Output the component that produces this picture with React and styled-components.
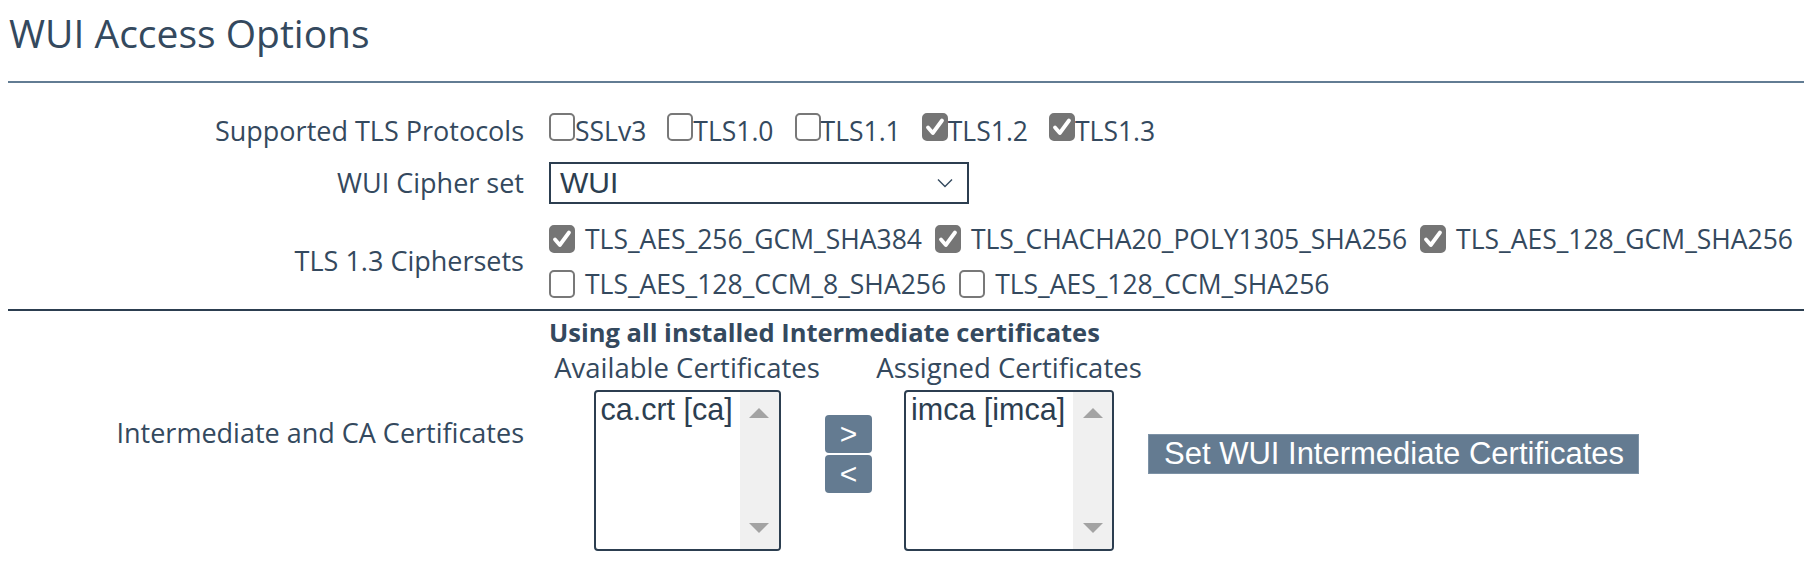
import React from 'react'
import styled, { createGlobalStyle } from 'styled-components'

const GlobalStyle = createGlobalStyle`
  body {
    margin: 0;
    background: #fff;
    font-family: "Open Sans", "Noto Sans", sans-serif;
    color: #34495e;
  }
`

const Page = styled.div`
  padding-left: 8px;
`

const Title = styled.h1`
  margin: 7px 0 0 1px;
  font-size: 39px;
  font-weight: 400;
  line-height: 52px;
  color: #34495e;
`

const Rule = styled.div`
  margin-top: ${p => p.$top}px;
  border-top: 2px solid ${p => p.$color};
`

const Row = styled.div`
  display: grid;
  grid-template-columns: 516px 1fr;
  column-gap: 25px;
  align-items: center;
  margin-top: ${p => p.$top}px;
`

const Label = styled.div`
  text-align: right;
  font-size: 27px;
  line-height: 36px;
  white-space: nowrap;
`

const ProtocolList = styled.div`
  display: flex;
  gap: 21px;
  font-size: 26.5px;
  line-height: 38px;
`

const Option = styled.label`
  display: flex;
  align-items: center;
  gap: ${p => p.$gap}px;
  white-space: nowrap;
`

const Box = styled.span`
  box-sizing: border-box;
  width: 26px;
  height: 28px;
  flex: none;
  display: flex;
  align-items: center;
  justify-content: center;
  border-radius: 5px;
  border: 2px solid ${p => (p.$checked ? '#757575' : '#787878')};
  background: ${p => (p.$checked ? '#757575' : '#fff')};
  margin-bottom: ${p => p.$lift || 0}px;
`

const CipherLine = styled.div`
  display: flex;
  align-items: center;
  gap: 13px;
  height: 45px;
  font-size: 26.5px;
`

const Select = styled.div`
  box-sizing: border-box;
  width: 420px;
  height: 42px;
  display: flex;
  align-items: center;
  justify-content: space-between;
  padding: 0 14px 0 9px;
  border: 2px solid #2c3e50;
  font-family: "Liberation Sans", Arial, sans-serif;
  font-size: 30px;
  color: #2c3e50;
`

const Caption = styled.div`
  font-size: 25.5px;
  font-weight: 700;
  line-height: 34px;
`

const CertGrid = styled.div`
  display: grid;
  grid-template-columns: 276px 47px 274px auto;
  grid-template-rows: 34px auto;
  row-gap: 5px;
  margin-top: 2px;
`

const ColHead = styled.div`
  grid-column: ${p => p.$col};
  text-align: center;
  font-size: 27.5px;
  line-height: 34px;
  white-space: nowrap;
`

const ListBox = styled.div`
  grid-column: ${p => p.$col};
  grid-row: 2;
  justify-self: center;
  box-sizing: border-box;
  width: ${p => p.$w}px;
  height: 161px;
  display: flex;
  border: 2px solid #2c3e50;
  border-radius: 4px;
  overflow: hidden;
`

const ListItems = styled.div`
  flex: 1;
  padding-left: 5px;
  font-family: "Liberation Sans", Arial, sans-serif;
  font-size: 30.5px;
  line-height: 34px;
  color: #2c3e50;
  white-space: nowrap;
`

const ScrollTrack = styled.div`
  width: 39px;
  flex: none;
  background: #f0f0f0;
  display: flex;
  flex-direction: column;
  justify-content: space-between;
  align-items: center;
  padding: 16px 0 16px;
`

const Arrow = styled.span`
  width: 0;
  height: 0;
  border-left: 10px solid transparent;
  border-right: 10px solid transparent;
  ${p => (p.$down ? 'border-top' : 'border-bottom')}: 10px solid #a3a3a3;
`

const MoveButtons = styled.div`
  grid-column: 2;
  grid-row: 1 / 3;
  align-self: center;
  margin-top: 6px;
  display: flex;
  flex-direction: column;
  gap: 2px;
`

const MoveButton = styled.button`
  width: 47px;
  height: 38px;
  padding: 0;
  border: 0;
  border-radius: 4px;
  background: #647b91;
  color: #fff;
  font-family: "Liberation Sans", Arial, sans-serif;
  font-size: 30px;
  line-height: 38px;
`

const SetButton = styled.button`
  grid-column: 4;
  grid-row: 1 / 3;
  align-self: center;
  justify-self: start;
  margin: 5px 0 0 2px;
  height: 40px;
  padding: 0 14px 0 15px;
  border: 1px solid #7d92a6;
  background: #647b91;
  color: #fff;
  font-family: "Liberation Sans", Arial, sans-serif;
  font-size: 31px;
  line-height: 38px;
  white-space: nowrap;
`

const Check = ({ checked, lift }) => (
  <Box $checked={checked} $lift={lift}>
    {checked && (
      <svg width="20" height="20" viewBox="0 0 20 20">
        <path d="M3 10.5 L7.8 16 L17 3.5" fill="none" stroke="#fff" strokeWidth="3.8" strokeLinecap="round" strokeLinejoin="round" />
      </svg>
    )}
  </Box>
)

const protocols = [
  { name: 'SSLv3', on: false },
  { name: 'TLS1.0', on: false },
  { name: 'TLS1.1', on: false },
  { name: 'TLS1.2', on: true },
  { name: 'TLS1.3', on: true },
]

const cipherLines = [
  [
    { name: 'TLS_AES_256_GCM_SHA384', on: true },
    { name: 'TLS_CHACHA20_POLY1305_SHA256', on: true },
    { name: 'TLS_AES_128_GCM_SHA256', on: true },
  ],
  [
    { name: 'TLS_AES_128_CCM_8_SHA256', on: false },
    { name: 'TLS_AES_128_CCM_SHA256', on: false },
  ],
]

const CertList = ({ col, width, items }) => (
  <ListBox $col={col} $w={width}>
    <ListItems>
      {items.map(i => <div key={i}>{i}</div>)}
    </ListItems>
    <ScrollTrack>
      <Arrow />
      <Arrow $down />
    </ScrollTrack>
  </ListBox>
)

export default function App() {
  return (
    <Page>
      <GlobalStyle />
      <Title>WUI Access Options</Title>
      <Rule $top={22} $color="#627c93" />

      <Row $top={29}>
        <Label>Supported TLS Protocols</Label>
        <ProtocolList>
          {protocols.map(p => (
            <Option key={p.name} $gap={0}>
              <Check checked={p.on} lift={9} />
              {p.name}
            </Option>
          ))}
        </ProtocolList>
      </Row>

      <Row $top={12}>
        <Label>WUI Cipher set</Label>
        <Select>
          WUI
          <svg width="16" height="10" viewBox="0 0 16 10">
            <path d="M1 1.5 L8 8.5 L15 1.5" fill="none" stroke="#34495e" strokeWidth="1.4" />
          </svg>
        </Select>
      </Row>

      <Row $top={12}>
        <Label>TLS 1.3 Ciphersets</Label>
        <div>
          {cipherLines.map((line, n) => (
            <CipherLine key={n}>
              {line.map(c => (
                <Option key={c.name} $gap={10}>
                  <Check checked={c.on} />
                  {c.name}
                </Option>
              ))}
            </CipherLine>
          ))}
        </div>
      </Row>

      <Rule $top={3} $color="#2c3e50" />

      <Row $top={4}>
        <Label>Intermediate and CA Certificates</Label>
        <div>
          <Caption>Using all installed Intermediate certificates</Caption>
          <CertGrid>
            <ColHead $col={1}>Available Certificates</ColHead>
            <ColHead $col={3}>Assigned Certificates</ColHead>
            <CertList col={1} width={187} items={['ca.crt [ca]']} />
            <MoveButtons>
              <MoveButton>&gt;</MoveButton>
              <MoveButton>&lt;</MoveButton>
            </MoveButtons>
            <CertList col={3} width={210} items={['imca [imca]']} />
            <SetButton>Set WUI Intermediate Certificates</SetButton>
          </CertGrid>
        </div>
      </Row>
    </Page>
  )
}
